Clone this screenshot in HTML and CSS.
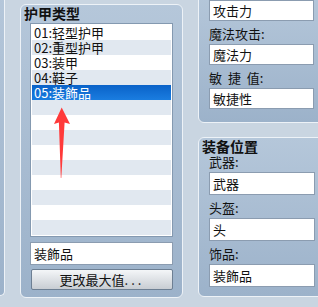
FILE: index.html
```html
<!DOCTYPE html>
<html lang="zh">
<head>
    <meta charset="UTF-8">
    <title>护甲类型</title>
    <link rel="stylesheet" href="styles.css">
</head>
<body>
    <div class="screen">
        <div class="panel stub"></div>

        <div class="panel armor">
            <div class="panel-title">护甲类型</div>
            <ul class="list">
                <li>01:轻型护甲</li>
                <li>02:重型护甲</li>
                <li>03:装甲</li>
                <li>04:鞋子</li>
                <li class="selected">05:装飾品</li>
                <li></li>
                <li></li>
                <li></li>
                <li></li>
                <li></li>
                <li></li>
                <li></li>
                <li></li>
                <li></li>
            </ul>
            <div class="field-box">装飾品</div>
            <button class="btn">更改最大值<span class="dots">...</span></button>

            <!-- annotation arrow -->
            <svg class="arrow" width="19" height="76" viewBox="0 0 19 76">
                <polygon points="8.7,2.5 17,19 11.6,17.6 8.3,73 7.8,73 5.9,17.6 1,19" fill="#ff3a3a"/>
            </svg>
        </div>

        <div class="side">
            <div class="panel stats">
                <div class="field-box">攻击力</div>
                <div class="field-label">魔法攻击:</div>
                <div class="field-box">魔法力</div>
                <div class="field-label spaced">敏 捷 值:</div>
                <div class="field-box">敏捷性</div>
            </div>

            <div class="panel equip">
                <div class="panel-title">装备位置</div>
                <div class="field-label first">武器:</div>
                <div class="field-box">武器</div>
                <div class="field-label">头盔:</div>
                <div class="field-box">头</div>
                <div class="field-label">饰品:</div>
                <div class="field-box">装飾品</div>
            </div>
        </div>
    </div>
</body>
</html>
```

FILE: styles.css
```css
body {
    margin: 0;
    width: 318px;
    height: 307px;
    overflow: hidden;
    background: #c9d5e1;
    font-family: "Noto Sans CJK JP", "Noto Sans CJK SC", sans-serif;
    font-size: 13px;
    color: #111;
}
.screen {
    display: flex;
    align-items: flex-start;
    gap: 15px;
}
.panel {
    box-sizing: border-box;
    background: linear-gradient(#b5c7da, #9cb2ca);
    border: 1px solid #edf2f7;
    border-radius: 6px;
    flex: none;
}
.stub {
    width: 5px;
    height: 304px;
    margin-top: -8px;
    border-top: none;
    border-left: none;
    border-radius: 0 0 6px 0;
}
.armor {
    position: relative;
    width: 163px;
    margin-top: 4px;
    padding: 0 9px 7px;
}
.panel-title {
    font-weight: bold;
    font-size: 14px;
    line-height: 16px;
    margin: 0 0 2px -6px;
}
.list {
    list-style: none;
    margin: 0 0 5px;
    padding: 1px;
    border: 1px solid #8499b0;
    background: #fff;
}
.list li {
    height: 15px;
    line-height: 15px;
    padding-left: 2px;
    white-space: nowrap;
}
.list li:nth-child(even) {
    background: #e1e8f0;
}
.list li.selected {
    background: linear-gradient(#0a62c8, #1a7de0);
    color: #fff;
}
.field-box {
    box-sizing: border-box;
    height: 23px;
    line-height: 21px;
    padding: 0 3px;
    border: 1px solid #8b9cb0;
    background: #fff;
    white-space: nowrap;
}
.btn {
    display: block;
    box-sizing: border-box;
    width: 142px;
    height: 21px;
    margin: 4px 0 0 1px;
    padding: 0;
    border: 1px solid #6d7f93;
    border-radius: 2px;
    background: linear-gradient(#f4f6f8, #c8cdd3);
    font-family: inherit;
    font-size: 13px;
    line-height: 19px;
    color: #111;
}
.dots {
    letter-spacing: 3px;
}
.arrow {
    position: absolute;
    left: 32px;
    top: 100px;
}
.side {
    display: flex;
    flex-direction: column;
    gap: 14px;
    width: 130px;
    flex: none;
}
.stats {
    margin-top: -8px;
    padding: 7px 0 13px 10px;
}
.stats .field-box {
    width: 105px;
    height: 21px;
    line-height: 19px;
}
.field-label {
    line-height: 16px;
    margin: 5px 0 2px;
    white-space: nowrap;
}
.field-label.spaced {
    word-spacing: 3px;
}
.field-label.first {
    margin-top: 0;
}
.equip {
    padding: 0 0 9px 10px;
}
.equip .panel-title {
    margin: 0 0 0 -7px;
}
.equip .field-box {
    width: 106px;
}
```
